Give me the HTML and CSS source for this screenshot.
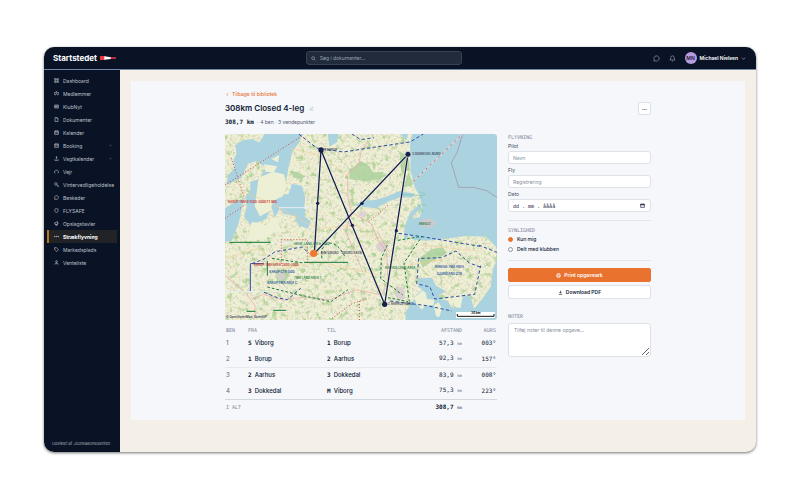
FILE: index.html
```html
<!DOCTYPE html>
<html lang="da">
<head>
<meta charset="utf-8">
<title>Startstedet</title>
<link rel="stylesheet" href="styles.css">
</head>
<body>
<svg class="defs" width="0" height="0" aria-hidden="true">
  <symbol id="i-grid" viewBox="0 0 24 24"><path d="M3 3h7v7H3zM14 3h7v7h-7zM3 14h7v7H3zM14 14h7v7h-7z"/></symbol>
  <symbol id="i-users" viewBox="0 0 24 24"><circle cx="12" cy="6" r="3.5"/><circle cx="4" cy="9" r="2"/><circle cx="20" cy="9" r="2"/><path d="M6 21c0-10 12-10 12 0M1 18c0-4 2-5 4-5M23 18c0-4-2-5-4-5"/></symbol>
  <symbol id="i-news" viewBox="0 0 24 24"><path d="M3 5h18v14H3zM7 9h5v6H7zM15 9h3M15 12h3M15 15h3"/></symbol>
  <symbol id="i-doc" viewBox="0 0 24 24"><path d="M5 2h9l5 5v15H5zM14 2v6h5"/></symbol>
  <symbol id="i-cal" viewBox="0 0 24 24"><path d="M3 5h18v16H3zM3 10h18M8 2v5M16 2v5M8 14h2M14 14h2M8 18h2M14 18h2"/></symbol>
  <symbol id="i-up" viewBox="0 0 24 24"><path d="M12 16V3M8 7l4-4 4 4M4 16v5h16v-5"/></symbol>
  <symbol id="i-cloud" viewBox="0 0 24 24"><path d="M7 19a5 5 0 0 1-1-10 7 7 0 0 1 13 2 4 4 0 0 1-1 8"/></symbol>
  <symbol id="i-tool" viewBox="0 0 24 24"><circle cx="9" cy="9" r="6"/><path d="M13 13l8 8M17 21h4v-4"/></symbol>
  <symbol id="i-msg" viewBox="0 0 24 24"><path d="M8 20l-5 1 1-5a9 9 0 1 1 4 4z"/></symbol>
  <symbol id="i-shield" viewBox="0 0 24 24"><path d="M12 2l8 4v6c0 5-3 8-8 10-5-2-8-5-8-10V6z"/></symbol>
  <symbol id="i-horn" viewBox="0 0 24 24"><path d="M3 9l14-6v16L3 14zM7 15l2 6h3l-1-5M20 9v4"/></symbol>
  <symbol id="i-route" viewBox="0 0 24 24"><circle cx="4" cy="12" r="1.5"/><circle cx="12" cy="12" r="1.5"/><circle cx="20" cy="12" r="1.5"/></symbol>
  <symbol id="i-tag" viewBox="0 0 24 24"><path d="M3 3h9l10 10-9 9L3 12zM7 7h1"/></symbol>
  <symbol id="i-person" viewBox="0 0 24 24"><circle cx="12" cy="7" r="4"/><path d="M3 21l6-8h6l6 8M9 21l3-4 3 4"/></symbol>
  <symbol id="i-search" viewBox="0 0 24 24"><circle cx="10" cy="10" r="7"/><path d="M15 15l6 6"/></symbol>
  <symbol id="i-bell" viewBox="0 0 24 24"><path d="M6 9a6 6 0 0 1 12 0c0 6 3 8 3 8H3s3-2 3-8M10 21h4"/></symbol>
  <symbol id="i-down" viewBox="0 0 24 24"><path d="M4 8l8 8 8-8"/></symbol>
  <symbol id="i-left" viewBox="0 0 24 24"><path d="M14 6l-6 6 6 6"/></symbol>
  <symbol id="i-right" viewBox="0 0 24 24"><path d="M9 5l7 7-7 7"/></symbol>
  <symbol id="i-pen" viewBox="0 0 24 24"><path d="M4 20l1-5L17 3l4 4L9 19zM12 21h9"/></symbol>
  <symbol id="i-print" viewBox="0 0 24 24"><path d="M6 9V3h12v6M6 17H3V9h18v8h-3M7 14h10v7H7z"/></symbol>
  <symbol id="i-load" viewBox="0 0 24 24"><path d="M12 3v12M7 10l5 5 5-5M4 21h16"/></symbol>
  <symbol id="i-date" viewBox="0 0 24 24"><path d="M3 5h18v16H3zM3 9h18M3 7h18"/></symbol>
</svg>

<div class="window">
  <header class="topbar">
    <a class="brand" href="#">Startstedet
      <svg class="windsock" viewBox="0 0 48 12" aria-hidden="true"><path fill="#e63946" d="M0 0h16v12H0z"/><path fill="#fff" d="M13 1l20 3v5l-20 2z"/><path fill="#e63946" d="M32 4h16v4H32z"/></svg>
    </a>
    <label class="search"><svg class="icon"><use href="#i-search"/></svg><input type="search" placeholder="Søg i dokumenter…" aria-label="Søg i dokumenter"></label>
    <div class="account">
      <button class="plain" aria-label="Beskeder"><svg class="icon big"><use href="#i-msg"/></svg></button>
      <button class="plain" aria-label="Notifikationer"><svg class="icon big"><use href="#i-bell"/></svg></button>
      <button class="plain user"><span class="avatar">MN</span>Michael Nielsen<svg class="icon"><use href="#i-down"/></svg></button>
    </div>
  </header>

  <div class="body">
    <aside class="sidebar">
      <nav>
        <a href="#"><svg class="icon"><use href="#i-grid"/></svg>Dashboard</a>
        <a href="#"><svg class="icon"><use href="#i-users"/></svg>Medlemmer</a>
        <a href="#"><svg class="icon"><use href="#i-news"/></svg>KlubNyt</a>
        <a href="#"><svg class="icon"><use href="#i-doc"/></svg>Dokumenter</a>
        <a href="#"><svg class="icon"><use href="#i-cal"/></svg>Kalender</a>
        <a href="#"><svg class="icon"><use href="#i-cal"/></svg>Booking<svg class="icon more"><use href="#i-right"/></svg></a>
        <a href="#"><svg class="icon"><use href="#i-up"/></svg>Vagtkalender<svg class="icon more"><use href="#i-right"/></svg></a>
        <a href="#"><svg class="icon"><use href="#i-cloud"/></svg>Vejr</a>
        <a href="#"><svg class="icon"><use href="#i-tool"/></svg>Vintervedligeholdelse</a>
        <a href="#"><svg class="icon"><use href="#i-msg"/></svg>Beskeder</a>
        <a href="#"><svg class="icon"><use href="#i-shield"/></svg>FLYSAFE</a>
        <a href="#"><svg class="icon"><use href="#i-horn"/></svg>Opslagstavler</a>
        <a href="#" class="active" aria-current="page"><svg class="icon"><use href="#i-route"/></svg>Strækflyvning</a>
        <a href="#"><svg class="icon"><use href="#i-tag"/></svg>Markedsplads</a>
        <a href="#"><svg class="icon"><use href="#i-person"/></svg>Venteliste</a>
      </nav>
      <p class="credit">Udviklet af Joomlakonsulenten</p>
    </aside>

    <main class="main">
      <div class="panel">
        <div class="content">
          <a class="back" href="#"><svg class="icon"><use href="#i-left"/></svg>Tilbage til bibliotek</a>
          <div class="heading">
            <div>
              <h1>308km Closed 4-leg <button class="plain" aria-label="Omdøb"><svg class="icon"><use href="#i-pen"/></svg></button></h1>
              <p class="summary"><b class="mono">308,7 km</b> · 4 ben · 3 vendepunkter</p>
            </div>
            <button class="menu" aria-label="Flere handlinger">···</button>
          </div>

          <div class="columns">
            <section class="route">
              <svg class="map" viewBox="9 267 816 558" role="img" aria-label="Kort over ruten">
                <defs>
                  <filter id="woods" x="0" y="0" width="100%" height="100%" color-interpolation-filters="sRGB"><feTurbulence type="fractalNoise" baseFrequency=".06" numOctaves="5" seed="4"/><feColorMatrix values="0 0 0 0 .66  0 0 0 0 .81  0 0 0 0 .56  0 5 0 0 -2.8"/></filter>
                  <filter id="towns" x="0" y="0" width="100%" height="100%" color-interpolation-filters="sRGB"><feTurbulence type="fractalNoise" baseFrequency=".13" numOctaves="4" seed="21"/><feColorMatrix values="0 0 0 0 .79  0 0 0 0 .77  0 0 0 0 .75  6 0 0 0 -3.2"/></filter>
                  <filter id="fields" x="0" y="0" width="100%" height="100%" color-interpolation-filters="sRGB"><feTurbulence type="fractalNoise" baseFrequency=".15" numOctaves="3" seed="9"/><feColorMatrix values="0 0 0 0 .96  0 0 0 0 .87  0 0 0 0 .73  0 0 7 0 -3.9"/></filter>
                  <clipPath id="land"><path d="M9 267H570l-6 30 2 80 12 50 14 24 8 34-6 30-30 10-8 40 20 20 36 2 60-6 60-8 60 2 30 30 6 30-16 40-6 50-28 40-22 26-10-36-20-4-16 30-22 8-10-22-32-6-22-30-14-10-30 34-28 44-4 56H9z"/></clipPath>
                </defs>
                <rect x="9" y="267" width="816" height="558" fill="#aad3df"/>
                <g clip-path="url(#land)">
                  <rect x="9" y="267" width="816" height="558" fill="#edf0d5"/>
                  <rect x="9" y="267" width="816" height="558" filter="url(#fields)" opacity=".6"/>
                  <rect x="9" y="267" width="816" height="558" filter="url(#towns)" opacity=".5"/>
                  <rect x="9" y="267" width="816" height="558" filter="url(#woods)" opacity=".8"/>
                  <g fill="#add19e" opacity=".85"><path d="M382 378l34-30 22 12 16 22 30-2-6 24-50 4-46-6zM532 320l28 10 4 46-26 4zM92 550l34-6 14 14-14 12-26-4zM205 378l24 4 20 12-14 10-22-8zM590 640l40-28 34-6 8 22-40 20-30 20zM160 680l26-10 18 14-14 26-24 6zM560 380l14 38-30 10z"/></g>
                  <g fill="#d9cdd0" opacity=".85"><path d="M160 690l20-12 12 18-18 12zM466 594l20-4 12 20-18 14-16-10zM414 498l20 4-4 16-20-6zM526 724l20 4 4 32-20 8-12-22z"/></g>
                </g>
                <g fill="#edf0d5"><path d="M576 758l14-10 10-12 12 8 2 18 24 2-4 16-26 2-8 12-16-16zM636 780l14-8 10 18-8 26-10-2zM690 755l18-10 12 20-4 24-14-2z"/></g>
                <g fill="#aad3df">
                  <path d="M128 267h114l-14 30-16 22-10 36-8 44-22 30 8 52-22 36-10-32-16 38-46 16-20-24 8-30-4-28 16-26-2-20 30-10 16-34-28-22 0-36z"/>
                  <path d="M40 300l22-14 28-4 26 12 10 26-22 28-26 8-20 42-44 22 4-30 20-20-4-26 10-18z"/>
                  <path d="M9 490l34-22 22-6-8 40-6 30-22 56-20 2zM170 482l10-30 20-6 10-30 30 6 10 36-4 40-30 16-32-8z"/>
                  <path d="M234 484l18 10-6 18 20 18-8 22-24-10-14-16zM318 267h32l-4 24-24 14zM396 480l34-14 26 0 34-10 44-18 46 8-10 12-34-2-38 14-36 20-36-4zM546 580l2-36 16-40 28-26 6 10-24 24-6 42-16 30zM536 267h22l-6 20zM590 700l40-2 12 24 30 16-20 12 8 20-30-8-14-22-28-14z"/>
                </g>
                <g fill="#edf0d5"><path d="M110 398l42-18 34 8 8 36-14 30-26 14-10 30-30 16-16-30 6-42zM90 530l40 10 34-24 10 32-50 34-50 8zM148 342l24-12-4 22zM126 358l40 6-10 18-26-2z"/></g>
                <path fill="#cfc9cd" d="M592 528l34-8 16 14-12 14-28-4z"/>
                <g fill="none" stroke="#e9a3a8" stroke-width="2"><path d="M438 290l-20 28-8 40-34 30 2 70 10 44 60 34 20 50 26 34 4 90-20 40-74-16-80 30-80-8-60 10-60-18-34 14M9 692l60 50 30 40 0 34M388 500l-16 60 50 120M500 620l-34-60"/></g>
                <g fill="none" stroke="#f4cf9b" stroke-width="2"><path d="M205 310l90 20 80 60M9 640l100-30 80 60 100-20 180 40M300 550l100-10 70 50M590 600l80 8 100 10M560 660l100-16M60 440l80 30 160 90"/></g>
                <g fill="none" stroke="#e9eef2" stroke-width="3"><path d="M170 488h100M9 740h180M150 592h150"/></g>
                <path fill="none" stroke="#a6a0b8" stroke-width="3" d="M722 267l-16 54-18 32 22 74 44 0 40 10 31 20"/>
                <g fill="none" stroke="#d04a4a" stroke-width="3" stroke-dasharray="3 6"><path d="M9 420l232-148M9 520l60-40M28 340l40 120M178 656V584h78v70M330 820l60-44 50-16M412 825v-60M440 530l60-50"/><path d="M575 408l147-141" stroke="#f2d9d9" stroke-dasharray="none"/><path d="M575 408l147-141" stroke-dasharray="5 12"/></g>
                <g fill="none" stroke="#2b4fa3" stroke-width="3" stroke-dasharray="10 7"><path d="M230 267l54 42 80 12 90-14 110-16 40-24M390 267l26 17 40-6M90 656l36-14 34-22 80-14 22 20M126 742l40 16 30 6 40-34M530 565l70 10 180 30M590 640l-6 76 40 10 14 36 120-14 18-86M598 640l60-2 44-20 40 36 32 12M504 768l110 14 76 16M770 600l55 22"/><path d="M85 738V656h40" stroke-dasharray="none"/></g>
                <g fill="none" stroke="#157a3c" stroke-width="3"><path d="M22 592h124M246 652h132M136 648v44M74 799h26M154 796h38"/><path stroke-dasharray="8 6" d="M136 726l80 20 110 24 52-36M496 600l-18 40-2 60 66 50M528 586l72-12-54 80 16 116M300 640c-10-50 40-70 70-2M150 640l94 14M498 758l60 12"/></g>
                <g fill="none" stroke="#7cc79f" stroke-width="2"><path d="M594 440l16 8-22 14M586 480h26M590 480l14 22M540 448l60 4"/></g>
                <g class="map-text">
                  <g fill="#c22a2a"><text x="18" y="474">KARUP TMA B 1500-3000 FT MSL</text><text x="96" y="663">KARUP TMA AREA 2500-3500</text></g>
                  <g fill="#157a3c"><text x="216" y="601">SKIVE LAND AREA 4500</text><text x="216" y="701">TMA LAND AREA 1</text><text x="488" y="671">AARHUS LAND AREA</text><text x="590" y="540">ANHOLT</text></g>
                  <g fill="#2b4fa3"><text x="142" y="684">KARUP CTR 1500</text><text x="136" y="717">KARUP TMA AREA C</text><text x="638" y="668">AARHUS TMA AREA</text><text x="644" y="690">DJURSLAND CTR</text></g>
                  <g fill="#3a4257"><text x="308" y="318">1 BORUP</text><text x="570" y="331">3 DOKKEDAL NORD</text><text x="296" y="628">S/M VIBORG</text><text x="358" y="628">VIBORG EKVB</text><text x="498" y="781">2 AARHUS NORD</text><text x="12" y="818">© OpenStreetMap, OpenAIP</text></g>
                </g>
                <g fill="none" stroke="#fff" stroke-width="7" opacity=".55"><path d="M277 625l20-310 191 463 70-450z"/></g>
                <path fill="none" stroke="#18214a" stroke-width="4" d="M277 625l20-310 191 463 70-450z"/>
                <g fill="#18214a"><circle cx="287" cy="475" r="5"/><circle cx="391" cy="541" r="5"/><circle cx="420" cy="475" r="5"/><circle cx="523" cy="557" r="5"/><circle cx="297" cy="315" r="8"/><circle cx="558" cy="328" r="9" stroke="#fff" stroke-width="2"/><circle cx="488" cy="778" r="8"/></g>
                <circle cx="275" cy="625" r="11" fill="#f07830"/>
                <rect x="702" y="801" width="117" height="18" fill="#fff"/>
                <path d="M706 807v7h110v-7" fill="none" stroke="#111" stroke-width="3"/>
                <text class="scale" x="748" y="808">20 km</text>
              </svg>

              <table>
                <thead><tr><th>Ben</th><th>Fra</th><th>Til</th><th class="num">Afstand</th><th class="num">Kurs</th></tr></thead>
                <tbody>
                  <tr><td>1</td><td><b>S</b>Viborg</td><td><b>1</b>Borup</td><td class="num">57,3 <small>km</small></td><td class="num">003°</td></tr>
                  <tr><td>2</td><td><b>1</b>Borup</td><td><b>2</b>Aarhus</td><td class="num">92,3 <small>km</small></td><td class="num">157°</td></tr>
                  <tr><td>3</td><td><b>2</b>Aarhus</td><td><b>3</b>Dokkedal</td><td class="num">83,9 <small>km</small></td><td class="num">008°</td></tr>
                  <tr><td>4</td><td><b>3</b>Dokkedal</td><td><b>M</b>Viborg</td><td class="num">75,3 <small>km</small></td><td class="num">223°</td></tr>
                </tbody>
                <tfoot><tr><th colspan="3">I alt</th><td class="num total">308,7 <small>km</small></td><td></td></tr></tfoot>
              </table>
            </section>

            <form class="details">
              <section class="fields">
                <h2>Flyvning</h2>
                <label for="pilot">Pilot</label>
                <input id="pilot" type="text" placeholder="Navn">
                <label for="plane">Fly</label>
                <input id="plane" type="text" placeholder="Registrering">
                <label for="date">Dato</label>
                <div class="date"><input id="date" type="text" placeholder="dd . mm . åååå"><button type="button" class="plain" aria-label="Vælg dato"><svg class="icon"><use href="#i-date"/></svg></button></div>
              </section>
              <fieldset>
                <legend>Synlighed</legend>
                <label><input type="radio" name="access" checked>Kun mig</label>
                <label><input type="radio" name="access">Delt med klubben</label>
              </fieldset>
              <div class="actions">
                <button type="button" class="primary"><svg class="icon"><use href="#i-print"/></svg>Print opgaveark</button>
                <button type="button" class="secondary"><svg class="icon"><use href="#i-load"/></svg>Download PDF</button>
              </div>
              <label class="notes-label" for="notes">Noter</label>
              <textarea id="notes" placeholder="Tilføj noter til denne opgave…"></textarea>
            </form>
          </div>
        </div>
      </div>
    </main>
  </div>
</div>
</body>
</html>
```

FILE: styles.css
```css
* { box-sizing: border-box; }
body {
  margin: 0;
  min-height: 100vh;
  padding: 47px 44px 48px;
  display: flex;
  background: #fff;
  color: #0f1a35;
  font: 5px/8px Inter, "Liberation Sans", sans-serif;
}
h1, h2, p { margin: 0; font: inherit; }
a { color: inherit; text-decoration: none; }
button, input, textarea { font: inherit; color: inherit; margin: 0; min-width: 0; }
.defs { position: absolute; }
.plain { border: 0; padding: 0; background: none; display: inline-flex; align-items: center; }
.icon { width: 5px; height: 5px; flex: none; fill: none; stroke: currentColor; stroke-width: 3; }
.icon.big { width: 7px; height: 7px; stroke-width: 2; }
.mono, .num, td b { font-family: "DejaVu Sans Mono", "Liberation Mono", monospace; }

.window {
  flex: 1;
  display: flex;
  flex-direction: column;
  border-radius: 10px;
  overflow: hidden;
  background: #f4f0e8;
  box-shadow: 0 1px 3px rgba(0, 0, 0, .55);
}

.topbar {
  display: grid;
  grid-template-columns: 8fr 156px 9fr;
  align-items: center;
  height: 23px;
  padding: 0 10px 0 9px;
  background: #0a1326;
  border-bottom: 1px solid #7486a5;
  color: #fff;
}
.brand { display: flex; align-items: center; gap: 3px; font-size: 8px; font-weight: 700; }
.windsock { width: 16px; height: 4px; }
.search {
  display: flex;
  align-items: center;
  gap: 4px;
  height: 14px;
  padding: 0 4px;
  border: 1px solid #384154;
  border-radius: 3px;
  background: #222b3c;
  color: #9aa2b0;
}
.search input { flex: 1; border: 0; padding: 0; background: none; outline: 0; }
.search input::placeholder { color: #9aa2b0; }
.account { display: flex; justify-content: flex-end; align-items: center; gap: 9px; color: #aab2c0; }
.user { gap: 3px; color: #fff; font-weight: 600; }
.user .icon { color: #aab2c0; }
.avatar {
  width: 12px;
  height: 12px;
  border-radius: 50%;
  background: #b79be0;
  color: #1c1638;
  line-height: 12px;
  text-align: center;
}

.body { flex: 1; display: flex; }
.sidebar {
  width: 76px;
  flex: none;
  display: flex;
  flex-direction: column;
  justify-content: space-between;
  padding: 4px 3px;
  background: #0a1326;
  color: #bcc1ca;
}
.sidebar a {
  display: flex;
  align-items: center;
  gap: 4px;
  height: 13px;
  padding-left: 5px;
  border-left: 2px solid transparent;
  white-space: nowrap;
}
.sidebar .active { background: #222327; border-color: #b77816; color: #fff; font-weight: 700; }
.sidebar .more { width: 3px; height: 3px; margin: 0 5px 0 auto; }
.credit { padding: 0 5px; color: #a3a9b5; font-size: 4px; white-space: nowrap; }

.main { flex: 1; padding: 11px 11px 32px; }
.panel { height: 100%; padding: 8px 20px 5px; background: #f5f7fa; }
.content { max-width: 426px; margin: 0 auto; }
.back { display: flex; align-items: center; gap: 2px; height: 10px; color: #e8722e; font-weight: 500; }
.heading { display: flex; justify-content: space-between; align-items: flex-start; padding: 3px 0 7px; }
h1 { display: flex; align-items: center; gap: 5px; font-size: 8px; line-height: 12px; font-weight: 600; }
h1 .icon { color: #939baa; stroke-width: 2; }
.summary { margin-top: 3px; line-height: 10px; color: #515b70; }
.summary .mono { margin-right: 2px; font-size: 6px; color: #0f1a35; }
.menu {
  width: 13px;
  height: 13px;
  padding: 0;
  border: 1px solid #dce0e7;
  border-radius: 2px;
  background: #fff;
  font-weight: 700;
  line-height: 8px;
}

.columns { display: grid; grid-template-columns: 272fr 143fr; gap: 11px; align-items: start; }
.map { display: block; width: 100%; border-radius: 3px; }
.map-text { font-size: 9px; font-weight: 600; }
.scale { font-size: 9px; font-weight: 700; }

table { width: 100%; margin-top: 3px; border-collapse: collapse; table-layout: fixed; }
th, td { padding: 0 1px; height: 16px; text-align: left; font-weight: 500; }
thead th { height: 12px; padding-top: 2px; }
th { font-family: "DejaVu Sans Mono", monospace; font-size: 5px; font-weight: 400; text-transform: uppercase; color: #7d8699; }
th:nth-child(1) { width: 22px; }
th:nth-child(2) { width: 79px; }
th:nth-child(4) { width: 50px; }
th:nth-child(5) { width: 34px; }
td:first-child { color: #6b7488; }
td b { margin-right: 3px; }
tbody tr { font-size: 6px; }
tbody tr:nth-child(2) { border-bottom: 1px solid #e6e9ee; }
.num { text-align: right; }
.num small { font-size: 4px; color: #6b7488; }
tfoot { border-top: 1px solid #d3d7de; }
.total { font-size: 6px; font-weight: 700; }

h2, legend, .notes-label {
  display: block;
  padding: 0;
  font: 400 5px/6px "DejaVu Sans Mono", monospace;
  text-transform: uppercase;
  color: #7d8699;
}
.fields { display: flex; flex-direction: column; padding-bottom: 8px; border-bottom: 1px solid #e2e5ea; }
.fields label { height: 8px; margin: 2px 0 1px; color: #3e485d; }
.fields input, textarea {
  width: 100%;
  height: 13px;
  padding: 0 4px;
  border: 1px solid #dde1e8;
  border-radius: 3px;
  background: #fff;
}
::placeholder { color: #858d9c; opacity: 1; }
.date { display: flex; align-items: center; border: 1px solid #dde1e8; border-radius: 3px; background: #fff; height: 13px; padding: 0 5px 0 0; }
.fields .date input { border: 0; height: 11px; font-family: "DejaVu Sans Mono", monospace; }
.date input::placeholder { color: #0f1a35; }
fieldset { margin: 0; padding: 1px 0 6px; border: 0; border-bottom: 1px solid #e2e5ea; min-width: 0; }
legend { padding-top: 6px; }
fieldset label { display: flex; align-items: center; gap: 4px; height: 10px; font-weight: 500; }
fieldset input { appearance: none; width: 5px; height: 5px; border: 1px solid #8d95a3; border-radius: 50%; background: #fff; }
fieldset input:checked { border-color: #e8722e; background: #e8722e; }
.actions { display: flex; flex-direction: column; gap: 3px; padding: 7px 0 14px; }
.actions button {
  display: flex;
  justify-content: center;
  align-items: center;
  gap: 3px;
  height: 14px;
  padding: 0;
  border: 1px solid #dde1e8;
  border-radius: 2px;
  background: #fff;
  font-weight: 600;
}
.actions .primary { background: #e8722e; border-color: #e8722e; color: #fff; }
textarea { display: block; height: 34px; margin-top: 4px; padding: 2px 5px; }
```
